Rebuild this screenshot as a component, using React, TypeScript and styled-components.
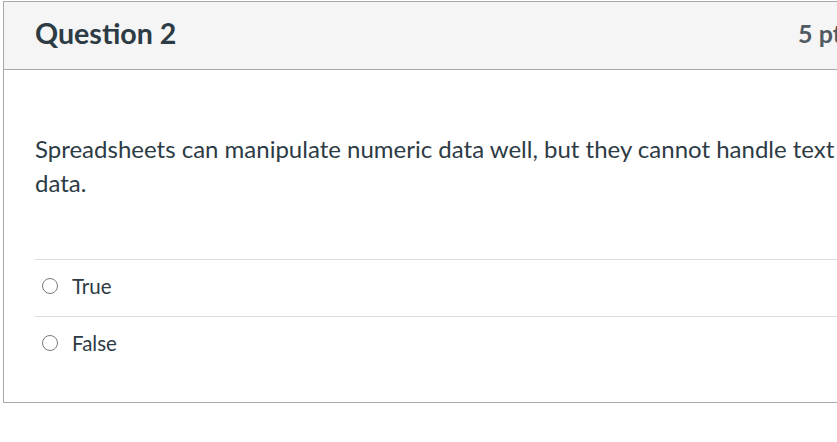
import React from 'react';
import styled, { createGlobalStyle } from 'styled-components';

const GlobalStyle = createGlobalStyle`
  html, body {
    margin: 0;
    padding: 0;
    background: #ffffff;
    overflow: hidden;
  }
  body {
    font-family: Lato, "Noto Sans", "Liberation Sans", sans-serif;
    color: #2d3b45;
  }
`;

const Page = styled.div`
  padding: 1px 0 0 3px;
  width: 900px;
`;

const QuestionCard = styled.section`
  width: 880px;
  border: 1px solid #a9a9a9;
  background: #ffffff;
`;

const QuestionHeader = styled.header`
  display: flex;
  justify-content: space-between;
  align-items: center;
  box-sizing: border-box;
  height: 68px;
  padding: 0 31px 5px 31px;
  background: #f5f5f5;
  border-bottom: 1px solid #a9a9a9;
`;

const QuestionTitle = styled.h2`
  margin: 0;
  font-size: 28.6px;
  font-weight: 700;
  color: #2d3b45;
`;

const Points = styled.span`
  font-size: 25px;
  font-weight: 700;
  color: #4f5a62;
`;

const QuestionBody = styled.div`
  padding: 62px 31px 29px 31px;
`;

const QuestionText = styled.p`
  margin: 0 0 59px;
  font-size: 24px;
  line-height: 34px;
`;

const AnswerList = styled.ul`
  list-style: none;
  margin: 0;
  padding: 0;
`;

const AnswerRow = styled.li`
  display: flex;
  align-items: center;
  gap: 14px;
  box-sizing: border-box;
  height: 57px;
  padding: 0 0 4px 7px;
  border-top: 1px solid #dddddd;
`;

const RadioCircle = styled.span`
  box-sizing: border-box;
  flex: none;
  width: 16px;
  height: 16px;
  border: 1.5px solid #7a7a7a;
  border-radius: 50%;
  background: #ffffff;
`;

const AnswerLabel = styled.span`
  font-size: 20.5px;
`;

const answers = ['True', 'False'];

const App = () => {
  return (
    <>
      <GlobalStyle />
      <Page>
        <QuestionCard>
          <QuestionHeader>
            <QuestionTitle>Question 2</QuestionTitle>
            <Points>5 pts</Points>
          </QuestionHeader>
          <QuestionBody>
            <QuestionText>
              Spreadsheets can manipulate numeric data well, but they cannot handle text data.
            </QuestionText>
            <AnswerList>
              {answers.map(answer => (
                <AnswerRow key={answer}>
                  <RadioCircle />
                  <AnswerLabel>{answer}</AnswerLabel>
                </AnswerRow>
              ))}
            </AnswerList>
          </QuestionBody>
        </QuestionCard>
      </Page>
    </>
  );
};

export default App;
